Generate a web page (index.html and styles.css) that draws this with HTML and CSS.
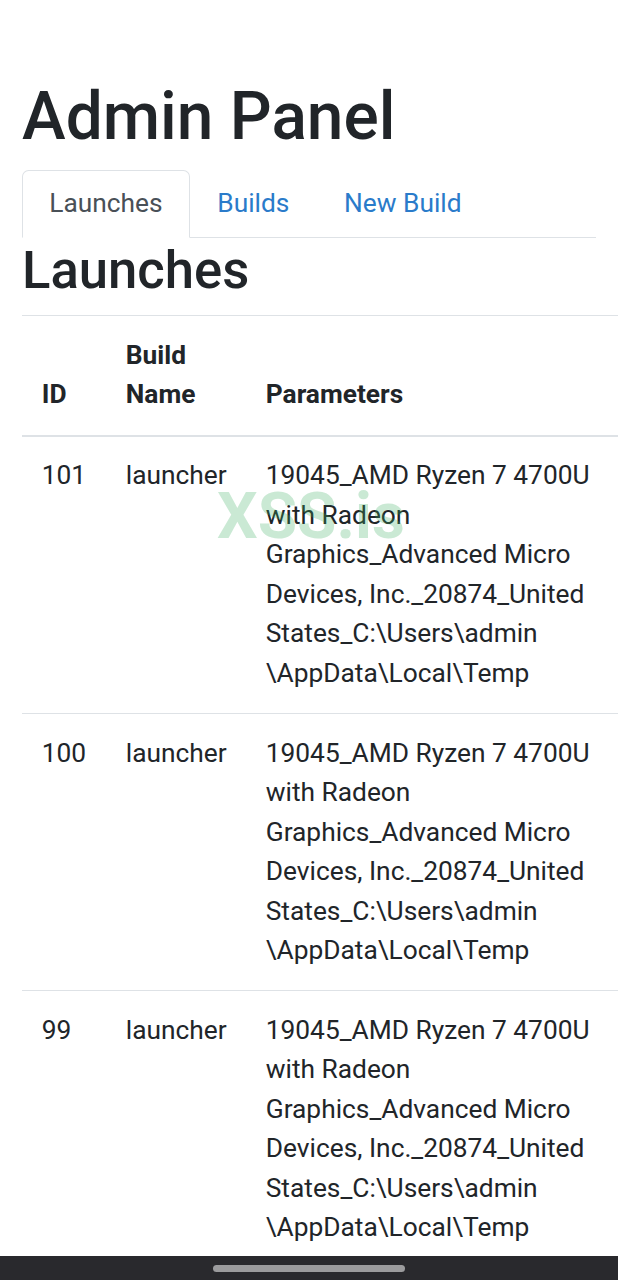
FILE: index.html
```html
<!DOCTYPE html>
<html lang="en">
<head>
<meta charset="utf-8">
<title>Admin Panel</title>
<link rel="stylesheet" href="styles.css">
</head>
<body>
<div class="container">
  <h1 class="title">Admin Panel</h1>
  <ul class="tabs">
    <li><a class="tab active" href="#">Launches</a></li>
    <li><a class="tab" href="#">Builds</a></li>
    <li><a class="tab" href="#">New Build</a></li>
  </ul>
  <div class="pane">
    <h2 class="section-title">Launches</h2>
    <div class="table-wrap">
      <table class="table">
        <colgroup><col class="c-id"><col class="c-name"><col></colgroup>
        <thead>
          <tr><th>ID</th><th>Build Name</th><th>Parameters</th></tr>
        </thead>
        <tbody>
          <tr><td>101</td><td>launcher</td><td class="params">19045_AMD Ryzen 7 4700U<br>with Radeon<br>Graphics_Advanced Micro<br>Devices, Inc._20874_United<br>States_C:\Users\admin<br>\AppData\Local\Temp</td></tr>
          <tr><td>100</td><td>launcher</td><td class="params">19045_AMD Ryzen 7 4700U<br>with Radeon<br>Graphics_Advanced Micro<br>Devices, Inc._20874_United<br>States_C:\Users\admin<br>\AppData\Local\Temp</td></tr>
          <tr><td>99</td><td>launcher</td><td class="params">19045_AMD Ryzen 7 4700U<br>with Radeon<br>Graphics_Advanced Micro<br>Devices, Inc._20874_United<br>States_C:\Users\admin<br>\AppData\Local\Temp</td></tr>
        </tbody>
      </table>
    </div>
  </div>
</div>
<div class="watermark">XSS.is</div>
<div class="navbar"><span class="pill"></span></div>
</body>
</html>
```

FILE: styles.css
```css
html { font-size: 26.32px; }
* { box-sizing: border-box; }
body {
  margin: 0;
  font-family: Roboto, "Liberation Sans", sans-serif;
  font-size: 1rem;
  line-height: 1.5;
  color: #212529;
  background: #fff;
  overflow: hidden;
  position: relative;
  height: 1280px;
}
.container {
  padding: 78px 22px 0 22px;
}
.title {
  margin: 0 0 0.5rem 0;
  font-size: 2.5rem;
  font-weight: 500;
  line-height: 1.2;
}
.tabs {
  list-style: none;
  margin: 0;
  padding: 0;
  display: flex;
  border-bottom: 1px solid #dee2e6;
}
.tabs li { margin-bottom: -1px; }
.tab {
  display: block;
  padding: 0.5rem 1rem;
  border: 1px solid transparent;
  border-top-left-radius: 0.25rem;
  border-top-right-radius: 0.25rem;
  color: #2a7bca;
  text-decoration: none;
}
.tab.active {
  color: #495057;
  background: #fff;
  border-color: #dee2e6 #dee2e6 #fff;
}
.pane { padding-top: 1px; }
.section-title {
  margin: 0 0 0.5rem 0;
  font-size: 2rem;
  font-weight: 500;
  line-height: 1.2;
}
.table-wrap {
  margin-right: -22px;
  overflow: hidden;
}
.table {
  width: 100%;
  border-collapse: collapse;
  table-layout: fixed;
}
.c-id { width: 84px; }
.c-name { width: 140px; }
.table th, .table td {
  padding: 0.75rem;
  vertical-align: top;
  border-top: 1px solid #dee2e6;
  text-align: left;
}
.table th {
  font-weight: 700;
  vertical-align: bottom;
  border-bottom: 2px solid #dee2e6;
}
.params { white-space: nowrap; }
.watermark {
  position: absolute;
  left: 217px;
  top: 485px;
  font-family: Roboto, "Liberation Sans", sans-serif;
  font-weight: 700;
  font-size: 64px;
  line-height: 1;
  color: rgba(60, 175, 95, 0.27);
  pointer-events: none;
}
.navbar {
  position: fixed;
  left: 0;
  right: 0;
  bottom: 0;
  height: 24px;
  background: #29292d;
  display: flex;
  justify-content: center;
  align-items: center;
}
.pill {
  width: 192px;
  height: 7px;
  border-radius: 4px;
  background: #9b9b9d;
}
```
